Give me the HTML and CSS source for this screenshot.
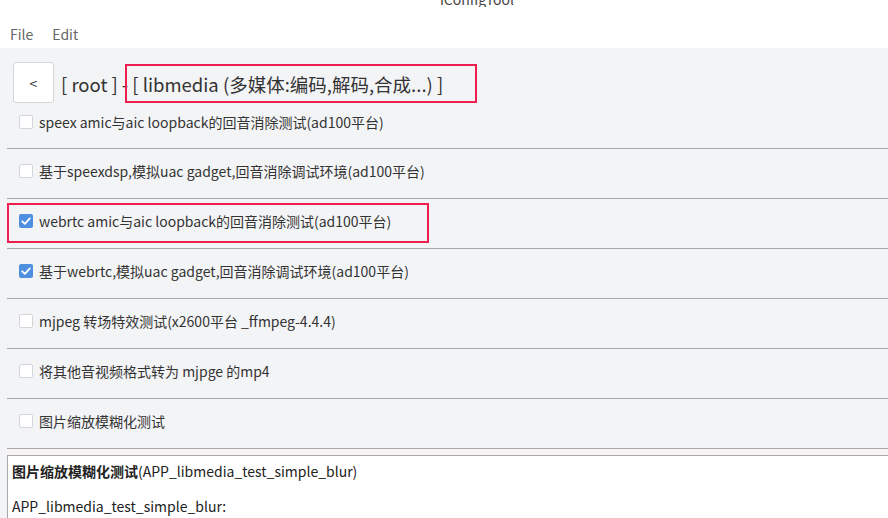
FILE: index.html
```html
<!DOCTYPE html>
<html lang="zh">
<head>
<meta charset="utf-8">
<title>iConfigTool</title>
<link rel="stylesheet" href="styles.css">
</head>
<body>
<div class="top">
  <div class="titlebar"><span>iConfigTool</span></div>
  <nav class="menu"><span>File</span><span>Edit</span></nav>
</div>
<main class="main">
  <div class="crumbs">
    <button class="back">&lt;</button>
    <span class="crumb">[ root ]</span>
    <span class="sep">-</span>
    <span class="crumb current">[ libmedia (多媒体:编码,解码,合成...) ]</span>
  </div>
  <ul class="list">
    <li class="row"><span class="cb"></span><span>speex amic与aic loopback的回音消除测试(ad100平台)</span></li>
    <li class="row"><span class="cb"></span><span>基于speexdsp,模拟uac gadget,回音消除调试环境(ad100平台)</span></li>
    <li class="row marked"><span class="cb on"><svg viewBox="0 0 14 14" width="14" height="14"><path d="M3.2 7.3 L5.9 9.9 L10.8 4.4" fill="none" stroke="#fff" stroke-width="1.8" stroke-linecap="round" stroke-linejoin="round"/></svg></span><span>webrtc amic与aic loopback的回音消除测试(ad100平台)</span></li>
    <li class="row"><span class="cb on"><svg viewBox="0 0 14 14" width="14" height="14"><path d="M3.2 7.3 L5.9 9.9 L10.8 4.4" fill="none" stroke="#fff" stroke-width="1.8" stroke-linecap="round" stroke-linejoin="round"/></svg></span><span>基于webrtc,模拟uac gadget,回音消除调试环境(ad100平台)</span></li>
    <li class="row"><span class="cb"></span><span>mjpeg 转场特效测试(x2600平台 _ffmpeg-4.4.4)</span></li>
    <li class="row"><span class="cb"></span><span>将其他音视频格式转为 mjpge 的mp4</span></li>
    <li class="row"><span class="cb"></span><span>图片缩放模糊化测试</span></li>
  </ul>
  <div class="splitter"></div>
  <section class="detail">
    <p><b>图片缩放模糊化测试</b>(APP_libmedia_test_simple_blur)</p>
    <p>APP_libmedia_test_simple_blur:</p>
  </section>
</main>
</body>
</html>
```
FILE: styles.css
```css
html, body {
  margin: 0;
  padding: 0;
  height: 518px;
  overflow: hidden;
}
body {
  font-family: "Noto Sans CJK SC", "Noto Sans", sans-serif;
  color: #333;
  background: #f3f4f6;
  display: flex;
  flex-direction: column;
}
.top {
  flex: none;
  background: #fff;
  height: 48px;
}
.titlebar {
  height: 7px;
  overflow: hidden;
  padding-left: 440px;
}
.titlebar span {
  display: block;
  margin-top: -9px;
  font-size: 14px;
  line-height: 16px;
  color: #444;
}
.menu {
  display: flex;
  gap: 19px;
  padding: 17px 0 0 10px;
  font-size: 14px;
  line-height: 20px;
  color: #666;
}
.main {
  flex: 1;
  min-height: 0;
  display: flex;
  flex-direction: column;
}
.crumbs {
  flex: none;
  display: flex;
  align-items: center;
  margin: 14px 0 0 13px;
  height: 41px;
  font-size: 18.5px;
  color: #333;
}
.crumb {
  position: relative;
  top: 1px;
}
.back {
  width: 41px;
  height: 41px;
  box-sizing: border-box;
  background: #fff;
  border: 1px solid #d4d5d8;
  border-radius: 3px;
  font-family: "Noto Sans CJK SC", sans-serif;
  font-size: 14px;
  color: #333;
  padding: 0;
  margin-right: 7px;
}
.sep {
  margin: 0 4px;
  position: relative;
  top: 1px;
}
.current::after {
  content: "";
  position: absolute;
  left: -7px;
  top: -7px;
  width: 348px;
  height: 35px;
  border: 2px solid #ee1f4f;
}
.list {
  flex: none;
  list-style: none;
  margin: 0 0 0 7px;
  padding: 0;
  font-size: 14px;
}
.row {
  position: relative;
  display: flex;
  align-items: center;
  gap: 6px;
  height: 44px;
  padding: 0 0 5px 12px;
  border-bottom: 1px solid #a9a9ad;
}
.row:first-child {
  height: 37px;
  padding-bottom: 8px;
}
.marked::after {
  content: "";
  position: absolute;
  left: 0;
  top: 4px;
  width: 418px;
  height: 36px;
  border: 2px solid #ee1f4f;
}
.cb {
  width: 14px;
  height: 14px;
  flex: none;
  box-sizing: border-box;
  border: 1px solid #d3d5da;
  border-radius: 2px;
  background: #fff;
}
.cb.on {
  border: none;
  background: #4f8fe0;
  display: flex;
}
.splitter {
  flex: none;
  height: 6px;
  margin-left: 7px;
  background: #f7f2f4;
  border-bottom: 1px solid #a9a9ad;
}
.detail {
  flex: 1;
  margin-left: 7px;
  background: #fff;
  border-left: 1px solid #a9a9ad;
  padding: 4px 0 0 4px;
  font-size: 14px;
  color: #222;
}
.detail p {
  margin: 0 0 13px;
  line-height: 22px;
}
.detail b {
  font-weight: 700;
}
```
